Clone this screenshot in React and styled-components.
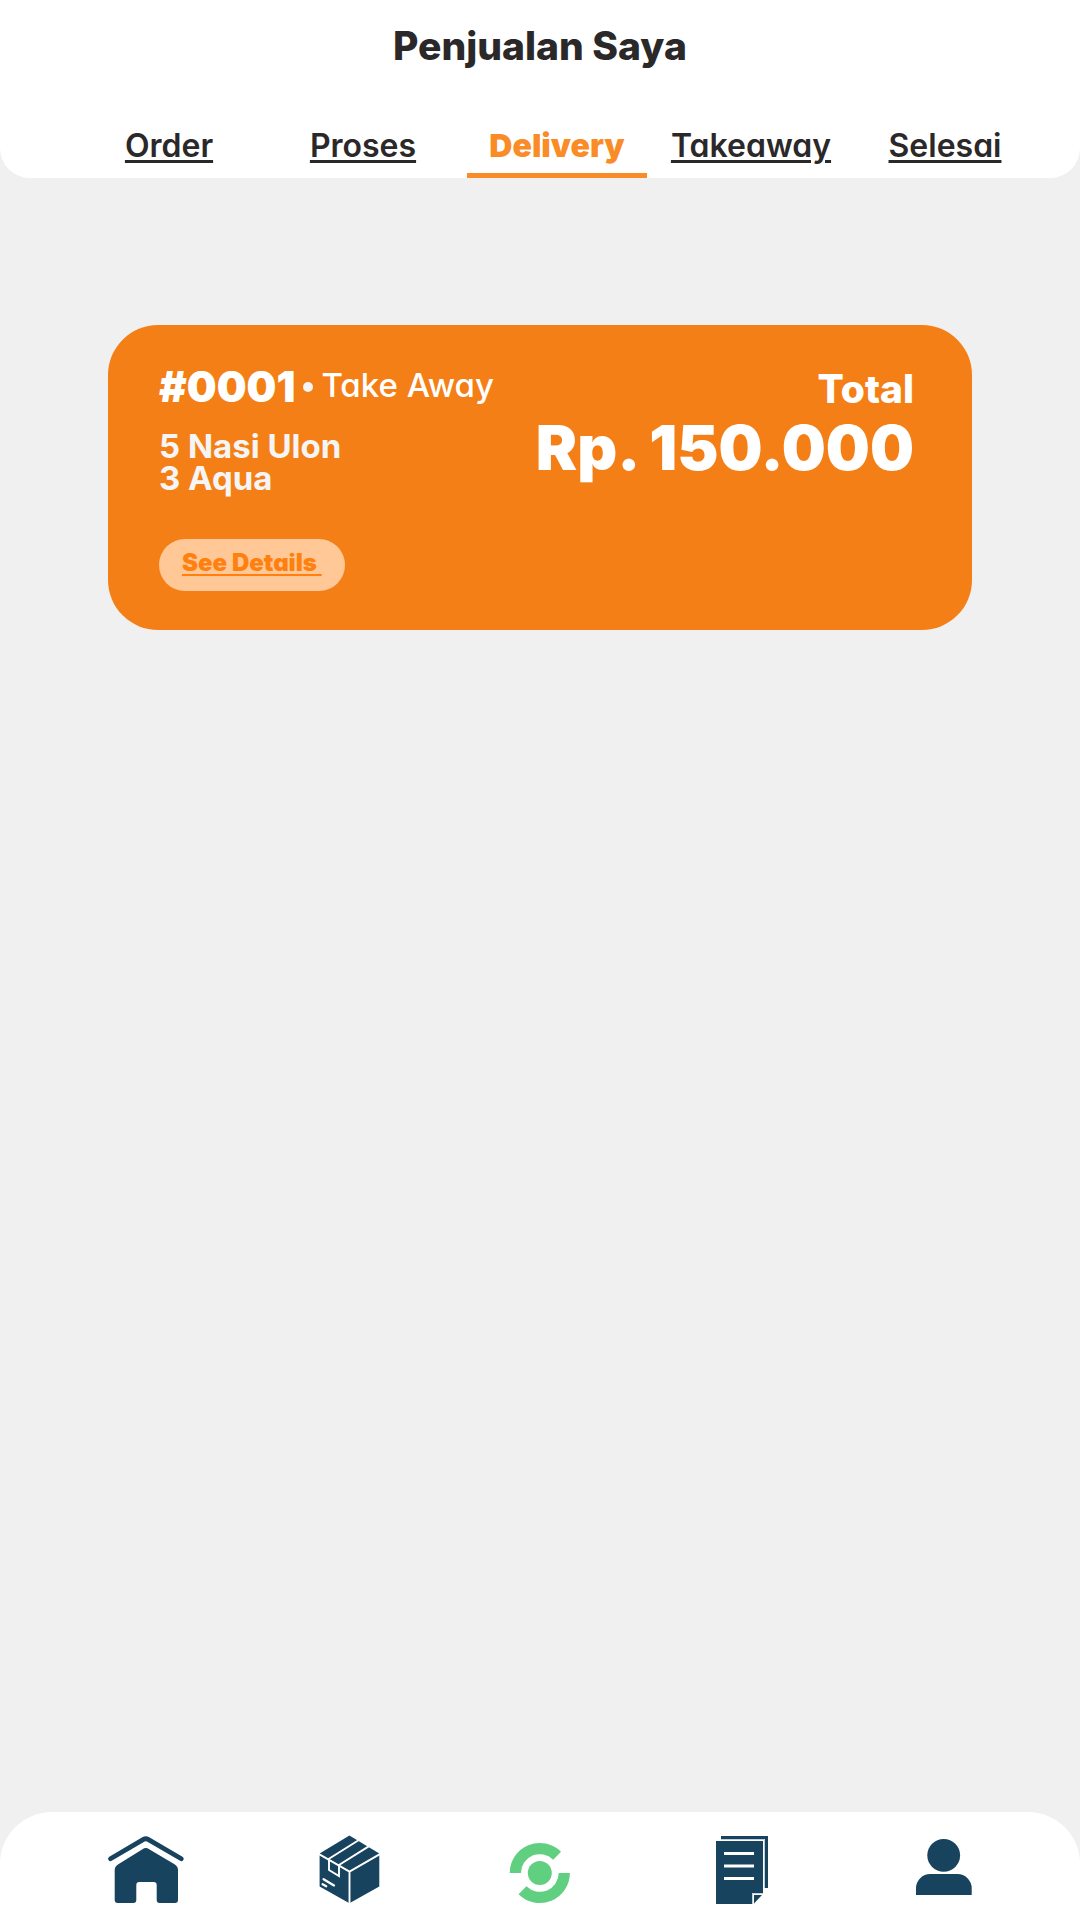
import React from "react";
import styled, { createGlobalStyle } from "styled-components";

const GlobalStyle = createGlobalStyle`
  *, *::before, *::after {
    box-sizing: border-box;
  }

  body {
    margin: 0;
    background: #f0f0f0;
    color: #2b2829;
    font-family: Inter, "Liberation Sans", sans-serif;
  }
`;

const Page = styled.div`
  display: flex;
  flex-direction: column;
  min-height: 100vh;
`;

const Header = styled.header`
  padding-top: 23px;
  background: #ffffff;
  border-radius: 0 0 30px 30px;
`;

const Title = styled.h1`
  margin: 0 0 57px;
  font-size: 39px;
  font-weight: 800;
  line-height: 46px;
  text-align: center;
`;

const Tabs = styled.nav`
  display: grid;
  grid-template-columns: repeat(5, 1fr);
  padding: 0 38px 0 72px;
`;

const Tab = styled.a`
  margin: 0 7px;
  padding-bottom: 7px;
  border-bottom: 5px solid ${(p) => (p.$active ? "#fa8c28" : "transparent")};
  color: ${(p) => (p.$active ? "#fa8c28" : "inherit")};
  font-size: 32px;
  font-weight: ${(p) => (p.$active ? 900 : 600)};
  font-feature-settings: "cv11";
  line-height: 40px;
  text-align: center;
  text-decoration: ${(p) => (p.$active ? "none" : "underline")};
  text-decoration-thickness: 3px;
  text-underline-offset: 3px;
`;

const Main = styled.main`
  flex: 1;
  padding: 147px 10%;
`;

const Card = styled.article`
  display: flex;
  justify-content: space-between;
  align-items: flex-start;
  padding: 38px 58px 39px 51px;
  background: #f57f17;
  border-radius: 50px;
  color: #ffffff;
`;

const OrderHead = styled.div`
  display: flex;
  gap: 8px;
`;

const OrderId = styled.h2`
  margin: 0;
  font-size: 42px;
  font-weight: 900;
  line-height: 48px;
`;

const Dot = styled.span`
  align-self: center;
  width: 10px;
  height: 10px;
  border-radius: 50%;
  background: #f5f5f5;
`;

const OrderType = styled.span`
  font-size: 33px;
  font-weight: 500;
  font-feature-settings: "cv11";
  line-height: 44px;
`;

const Items = styled.ul`
  margin: 19px 0 45px;
  padding: 0;
  list-style: none;
  color: #f5f5f5;
  font-size: 33px;
  font-weight: 700;
  line-height: 32px;
`;

const DetailsButton = styled.button`
  display: block;
  height: 52px;
  padding: 0 23px 4px;
  border: 0;
  border-radius: 26px;
  background: #ffc896;
  color: #ff800f;
  font: inherit;
  font-size: 24px;
  font-weight: 900;
  line-height: 48px;
  font-feature-settings: "cv11";
  white-space: pre;
  text-decoration: underline;
  text-decoration-thickness: 2px;
  text-underline-offset: 3px;
  cursor: pointer;
`;

const Summary = styled.div`
  padding-top: 4px;
  text-align: right;
`;

const TotalLabel = styled.div`
  margin-bottom: 5px;
  font-size: 39px;
  font-weight: 800;
  line-height: 44px;
`;

const TotalValue = styled.div`
  font-size: 62px;
  font-weight: 900;
  line-height: 64px;
`;

const BottomBar = styled.nav`
  display: grid;
  grid-template-columns: repeat(5, 1fr);
  padding: 18px 37px 12px 43px;
  background: #ffffff;
  border-radius: 52px 52px 0 0;
`;

const BarLink = styled.a`
  display: flex;
  justify-content: center;
  color: ${(p) => p.$color || "#17435f"};
`;

const Glyph = styled.svg`
  display: block;
  width: 88px;
  height: 78px;
  fill: currentColor;
`;

function HomeIcon() {
  return (
    <Glyph viewBox="0 0 88 78" aria-hidden="true">
      <path
        d="M11.5 28.7 L44.5 9.4 Q46.8 8.1 49.1 9.4 L82.3 28.7"
        fill="none"
        stroke="currentColor"
        strokeWidth="4.8"
        strokeLinecap="round"
      />
      <path d="M15.7 40Q15.7 36.4 19.3 34.2L43.5 19.2Q46.8 17 50.2 19.2L75.5 34.2Q79 36.4 79 40V70Q79 73 76 73H60.7Q57.7 73 57.7 70V55Q57.7 52 54.7 52H40.3Q37.3 52 37.3 55V70Q37.3 73 34.3 73H18.7Q15.7 73 15.7 70Z" />
    </Glyph>
  );
}

function BoxIcon() {
  return (
    <Glyph viewBox="0 0 88 78" aria-hidden="true">
      <path d="M50.4 5.6L80.3 23.6V56.4L50.4 73.2L20.6 56.4V23.6Z" />
      <g fill="none" stroke="#ffffff" strokeWidth="1.9">
        <path d="M19.6 23.9L50.5 41.6L81.3 23.9M50.5 41.6V74" />
        <path d="M59.5 10.2L30 28.7V40L40 46V35L69.7 16.4" />
        <path d="M24.6 49.2L35 55.4M23.6 54.2L27.2 56.2" strokeWidth="2.3" strokeLinecap="round" />
      </g>
    </Glyph>
  );
}

function HubIcon() {
  return (
    <Glyph viewBox="0 0 88 78" aria-hidden="true">
      <g fill="none" stroke="currentColor" strokeWidth="11.2">
        <path d="M16.3 43A24.5 24.5 0 0 1 58.1 25.7" />
        <path d="M65.3 43A24.5 24.5 0 0 1 23.5 60.3" />
      </g>
      <circle cx="40.8" cy="43" r="12" />
    </Glyph>
  );
}

function NotesIcon() {
  return (
    <Glyph viewBox="0 0 88 78" aria-hidden="true">
      <path d="M22 6H69V58H66V9H22Z" />
      <path d="M17 11H64V63H53V74H17Z" />
      <path d="M22 9.5H65.5V58M64 63.5H53.5V74" fill="none" stroke="#c3ced6" />
      <path d="M55 65H63L55 73.5Z" />
      <path d="M25 22H55V25H25ZM25 34.5H55V37.5H25ZM25 47H55V50H25Z" fill="#ffffff" />
    </Glyph>
  );
}

function UserIcon() {
  return (
    <Glyph viewBox="0 0 88 78" aria-hidden="true">
      <circle cx="44.7" cy="25.3" r="16.4" />
      <path d="M17 65V58.3A14.3 14.3 0 0 1 31.3 44H58.4A14.3 14.3 0 0 1 72.7 58.3V65Z" />
    </Glyph>
  );
}

const tabs = ["Order", "Proses", "Delivery", "Takeaway", "Selesai"];

const links = [
  { label: "Beranda", Icon: HomeIcon },
  { label: "Produk", Icon: BoxIcon },
  { label: "Menu utama", Icon: HubIcon, color: "#60d080" },
  { label: "Penjualan", Icon: NotesIcon },
  { label: "Akun", Icon: UserIcon },
];

export default function App() {
  return (
    <Page>
      <GlobalStyle />
      <Header>
        <Title>Penjualan Saya</Title>
        <Tabs aria-label="Status">
          {tabs.map((tab) => (
            <Tab
              key={tab}
              href={`#${tab.toLowerCase()}`}
              $active={tab === "Delivery"}
              aria-current={tab === "Delivery" ? "page" : undefined}
            >
              {tab}
            </Tab>
          ))}
        </Tabs>
      </Header>
      <Main>
        <Card>
          <div>
            <OrderHead>
              <OrderId>#0001</OrderId>
              <Dot />
              <OrderType>Take Away</OrderType>
            </OrderHead>
            <Items>
              <li>5 Nasi Ulon</li>
              <li>3 Aqua</li>
            </Items>
            <DetailsButton type="button">{"See Details "}</DetailsButton>
          </div>
          <Summary>
            <TotalLabel>Total</TotalLabel>
            <TotalValue>Rp. 150.000</TotalValue>
          </Summary>
        </Card>
      </Main>
      <BottomBar aria-label="Navigasi">
        {links.map(({ label, Icon, color }) => (
          <BarLink key={label} href="#" aria-label={label} $color={color}>
            <Icon />
          </BarLink>
        ))}
      </BottomBar>
    </Page>
  );
}
